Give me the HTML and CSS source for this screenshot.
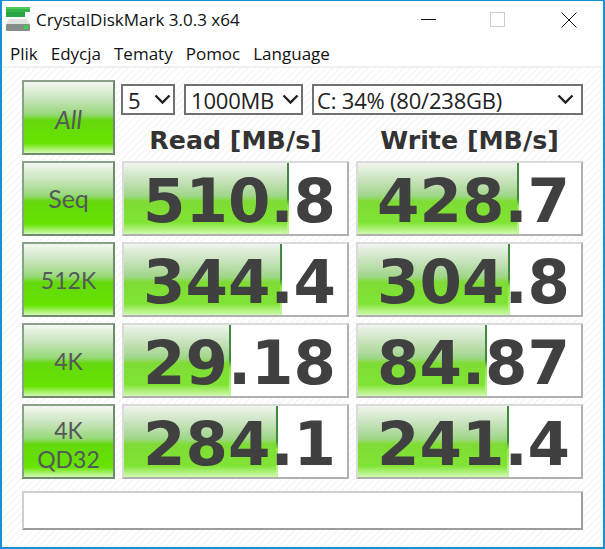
FILE: index.html
```html
<!DOCTYPE html>
<html lang="pl">
<head>
<meta charset="utf-8">
<title>CrystalDiskMark 3.0.3 x64</title>
<link rel="stylesheet" href="styles.css">
</head>
<body>
<div class="window">
  <header class="titlebar">
    <svg class="app-icon" width="26" height="26" viewBox="0 0 26 26">
      <rect x="0" y="1" width="24" height="2" fill="#56c95c"/>
      <rect x="0" y="3" width="24" height="3" fill="#35b548"/>
      <rect x="0" y="6" width="19" height="5" fill="#2aa544"/>
      <path d="M3 13h18l3 5H0z" fill="#dfe3df"/>
      <rect x="0" y="18" width="24" height="7" rx="1" fill="#868d88"/>
      <rect x="18" y="19" width="4" height="4" fill="#3ad04a"/>
    </svg>
    <span class="title">CrystalDiskMark 3.0.3 x64</span>
    <div class="controls">
      <svg class="ctl" width="46" height="30" viewBox="0 0 46 30"><path d="M15 17.500h15" stroke="#111" stroke-width="1"/></svg>
      <svg class="ctl" width="46" height="30" viewBox="0 0 46 30"><rect x="14.500" y="10.500" width="14" height="14" fill="none" stroke="#ccc"/></svg>
      <svg class="ctl" width="46" height="30" viewBox="0 0 46 30"><path d="M15.500 10.500l15 15M30.500 10.500l-15 15" stroke="#111" stroke-width="1"/></svg>
    </div>
  </header>
  <nav class="menu">
    <span>Plik</span><span>Edycja</span><span>Tematy</span><span>Pomoc</span><span>Language</span>
  </nav>
  <main class="panel">
    <div class="btn btn-all">All</div>
    <div class="top">
      <div class="selects">
        <div class="sel sel-count">5<svg class="chev" width="17" height="11" viewBox="0 0 17 11"><path d="M1.500 1.500L8.500 8.500l7-7" fill="none" stroke="#222" stroke-width="2.400"/></svg></div>
        <div class="sel sel-size">1000MB<svg class="chev" width="17" height="11" viewBox="0 0 17 11"><path d="M1.500 1.500L8.500 8.500l7-7" fill="none" stroke="#222" stroke-width="2.400"/></svg></div>
        <div class="sel sel-drive">C: 34% (80/238GB)<svg class="chev" width="17" height="11" viewBox="0 0 17 11"><path d="M1.500 1.500L8.500 8.500l7-7" fill="none" stroke="#222" stroke-width="2.400"/></svg></div>
      </div>
      <div class="heads"><div>Read [MB/s]</div><div>Write [MB/s]</div></div>
    </div>

    <div class="btn btn-seq">Seq</div>
    <div class="meter"><div class="fill" style="width:74%"></div><span>510.8</span></div>
    <div class="meter"><div class="fill" style="width:72%"></div><span>428.7</span></div>

    <div class="btn">512K</div>
    <div class="meter"><div class="fill" style="width:71%"></div><span>344.4</span></div>
    <div class="meter"><div class="fill" style="width:68%"></div><span>304.8</span></div>

    <div class="btn">4K</div>
    <div class="meter"><div class="fill" style="width:48%"></div><span>29.18</span></div>
    <div class="meter"><div class="fill" style="width:58%"></div><span>84.87</span></div>

    <div class="btn btn-two">4K<br>QD32</div>
    <div class="meter"><div class="fill" style="width:69%"></div><span>284.1</span></div>
    <div class="meter"><div class="fill" style="width:67.500%"></div><span>241.4</span></div>

    <div class="status"></div>
  </main>
</div>
</body>
</html>
```
FILE: styles.css
```css
* { box-sizing: border-box; }
html, body { margin: 0; padding: 0; }
body { width: 605px; height: 549px; overflow: hidden; background: #fff; }

.window {
  width: 605px; height: 549px;
  display: flex; flex-direction: column;
  border: 2px solid #1a8fd6;
  border-width: 1px 2px 2px 2px;
  font-family: "Open Sans", "Noto Sans", sans-serif;
  color: #111;
}
.titlebar {
  height: 33px; flex: none;
  display: flex; align-items: center;
  padding-left: 4px;
  background: #fff;
}
.app-icon { flex: none; margin-right: 4px; margin-top: 2px; }
.title { font-size: 17px; padding-top: 4px; color: #111; }
.controls { margin-left: auto; display: flex; gap: 24px; margin-right: 11px; margin-top: -1px; }

.menu {
  height: 32px; flex: none;
  display: flex; align-items: center; gap: 13px;
  padding-left: 8px; padding-top: 6px;
  font-size: 17px;
  background: #fff;
}
.panel {
  flex: 1;
  border-top: 2px solid #f0f0f0;
  background: repeating-linear-gradient(135deg, #fff 0 3px, #f8f8f8 3px 5px);
  padding: 12px 20px 0 20px;
  display: grid;
  grid-template-columns: 93px 227px 227px;
  grid-template-rows: 75px 75px 75px 75px 75px 45px;
  column-gap: 7px; row-gap: 6px;
}
.btn {
  display: flex; align-items: center; justify-content: center; text-align: center;
  border: 2px solid;
  border-color: #8aa088 #6f8a6c #6f8a6c #8aa088;
  background: linear-gradient(#f4f8f2 0%, #c8e4bc 24%, #96d878 46%, #64d80c 54%, #66e400 86%, #d2fab2 100%);
  font-family: "Lato", "Noto Sans", sans-serif;
  font-size: 23px; color: #55585a;
}
.btn-all { font-style: italic; font-size: 25px; padding-top: 3px; }
.btn-seq { font-size: 25px; padding-bottom: 2px; }
.btn-two { line-height: 29px; padding-top: 7px; }

.top { grid-column: 2 / 4; display: flex; flex-direction: column; padding-top: 4px; }
.selects { display: flex; height: 31px; margin-left: -1px; }
.sel {
  height: 31px; flex: none;
  border: 2px solid #707070;
  background: #fff;
  display: flex; align-items: center; justify-content: space-between;
  font-size: 22px; letter-spacing: -0.2px;
  padding: 0 4px 0 5px;
  color: #222;
}
.sel-count { width: 54px; margin-right: 9px; padding-right: 2px; }
.sel-size { width: 119px; margin-right: 9px; padding-right: 2px; }
.sel-drive { width: 271px; padding-left: 3px; padding-right: 7px; }
.heads {
  display: grid; grid-template-columns: 227px 227px; column-gap: 7px;
  margin-top: 11px;
  font-family: "DejaVu Sans", sans-serif; font-weight: 700;
  font-size: 25.300px; color: #333;
  white-space: nowrap;
}
.heads div { text-align: center; }

.meter {
  position: relative;
  display: flex; align-items: center; justify-content: flex-end;
  border: 2px solid;
  border-color: #dadada #b0b0b0 #b0b0b0 #dadada;
  background: #fff;
  overflow: hidden;
}
.fill {
  position: absolute; left: 0; top: 0; bottom: 0;
  border-right: 2px solid;
  border-image: linear-gradient(#3f8a3c, #3f8a3c 50%, #8ae840 60%, #c8f8a0) 1;
  background: linear-gradient(#f0f5ee 0%, #c8e2bc 24%, #a0d68a 46%, #7edc34 54%, #80e434 84%, #d0fab0 100%);
}
.meter span {
  position: relative;
  font-family: "DejaVu Sans", sans-serif; font-weight: 700;
  font-size: 61px; line-height: 1; color: #404040;
  padding: 4px 11px 0 0;
}
.status {
  grid-column: 1 / 4;
  margin-top: 6px;
  border: 2px solid;
  border-color: #cfcfcf #9c9c9c #9c9c9c #cfcfcf;
  background: #fff;
}
```
